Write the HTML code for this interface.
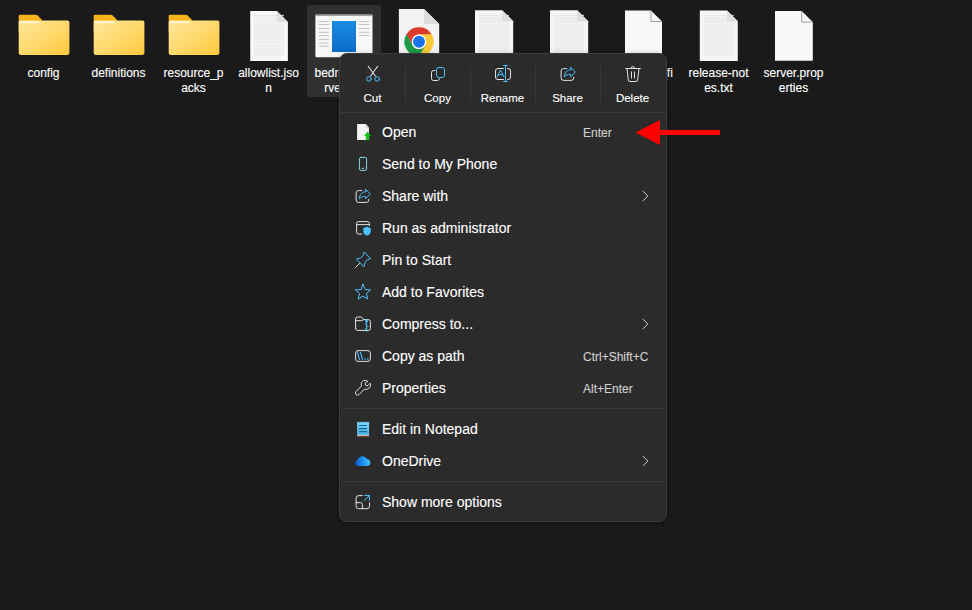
<!DOCTYPE html>
<html><head><meta charset="utf-8">
<style>
html,body{margin:0;padding:0;}
body{width:972px;height:610px;background:#1a1a1a;position:relative;overflow:hidden;font-family:"Liberation Sans",sans-serif;color:#fff;-webkit-text-stroke:0.12px currentColor;}
.abs{position:absolute;left:0;top:0;}
.lbl{position:absolute;width:75px;text-align:center;font-size:12px;line-height:15px;color:#fff;}
.sel{position:absolute;left:307px;top:5px;width:74px;height:92px;background:#303030;border-radius:2px;}
#menu{position:absolute;left:339px;top:53px;width:326px;height:467px;background:#2b2b2b;border:1px solid #3c3c3c;border-radius:8px;box-shadow:0 2px 6px rgba(0,0,0,0.3);}
.tb{position:absolute;top:0;width:65px;height:60px;}
.tb .t{position:absolute;left:0;width:65px;top:37px;text-align:center;font-size:11.5px;line-height:15px;color:#fff;}
.vsep{position:absolute;top:12px;width:1px;height:36px;background:#383838;}
.hsep{position:absolute;left:3px;width:321px;height:1px;background:#3a3a3a;}
.it{position:absolute;left:0;width:326px;height:32px;}
.it .t{position:absolute;left:42px;top:-2px;font-size:14px;line-height:32px;color:#fff;white-space:nowrap;}
.it .k{position:absolute;left:243px;top:-1px;font-size:12px;line-height:32px;color:#d0d0d0;white-space:nowrap;}
</style></head><body>

<!-- files row -->
<div class="sel"></div>

<svg class="abs" width="972" height="110" viewBox="0 0 972 110">
  <defs>
    <linearGradient id="fg" x1="0" y1="0" x2="1" y2="1">
      <stop offset="0" stop-color="#ffe69a"/>
      <stop offset="0.55" stop-color="#ffd86a"/>
      <stop offset="1" stop-color="#ffc83a"/>
    </linearGradient>
    <linearGradient id="bg" x1="0" y1="0" x2="0" y2="1">
      <stop offset="0" stop-color="#1a8ce2"/>
      <stop offset="1" stop-color="#0c6cc9"/>
    </linearGradient>
    <g id="folder">
      <path d="M18.7 16a1.2 1.2 0 0 1 1.2-1.2H35.6C36.4 14.8 37 15.1 37.6 15.6L41.6 19.6V32H18.7Z" fill="#f4b41a"/>
      <rect x="18.7" y="20.4" width="50.7" height="34.5" rx="1.8" fill="url(#fg)"/>
      <rect x="19.2" y="21" width="20.4" height="2.2" fill="#fff6d6" opacity="0.85"/>
    </g>
    <g id="lines">
      <path d="M254 15.4H284M254 17.6H284M254 19.8H284M254 22.0H284M254 24.2H284M254 26.4H284M254 28.6H284M254 30.8H284M254 33.0H284M254 35.2H284M254 37.4H284M254 39.6H284M254 41.8H284M254 44.0H284M254 46.2H284M254 48.4H284M254 50.6H284M254 52.8H284M254 55.0H284" stroke="#e4e4e4" stroke-width="0.9"/>
    </g>
  </defs>
  <use href="#folder"/>
  <use href="#folder" x="75"/>
  <use href="#folder" x="150"/>

  <!-- allowlist -->
  <path d="M250.2 11H276.8L287.9 22V61.1H250.2Z" fill="#f7f7f7"/>
  <use href="#lines"/>
  <path d="M276.8 11V22H287.9Z" fill="#e0e0e0"/>

  <!-- bedrock exe -->
  <rect x="315.4" y="14.4" width="57.1" height="42.8" rx="1" fill="#f7f7f7"/>
  <rect x="315.4" y="14.4" width="57.1" height="1.3" fill="#7a7a7a"/><path d="M366.5 15.6h1M368.5 15.6h1M370.5 15.6h1" stroke="#9a9a9a" stroke-width="0.8"/>
  <rect x="332" y="21" width="24" height="31" fill="url(#bg)"/>
  <path d="M318.7 21.5H329M318.7 24.5H329M318.7 28.5H329M318.7 32.3H329M318.7 35.5H329M318.7 39.4H329M318.7 43.1H329M318.7 46.3H329M359 21.5H369.2M359 24.5H369.2M359 28.5H369.2M359 32.3H369.2M359 35.5H369.2" stroke="#bdbdbd" stroke-width="0.9"/>

  <!-- chrome html -->
  <path d="M398.9 8.9H424L439.2 24V60H398.9Z" fill="#f3f3f3"/>
  <path d="M424 8.9V24H439.2Z" fill="#dcdcdc"/>
  <path d="M406.44 34.55A14.5 14.5 0 0 1 431.56 34.55L419 34.55A7.25 7.25 0 0 0 412.72 45.43Z" fill="#db3b2b" stroke="#db3b2b" stroke-width="0.3"/>
  <path d="M431.56 34.55A14.5 14.5 0 0 1 419 56.3L425.28 45.43A7.25 7.25 0 0 0 419 34.55Z" fill="#fcc934" stroke="#fcc934" stroke-width="0.3"/>
  <path d="M419 56.3A14.5 14.5 0 0 1 406.44 34.55L412.72 45.43A7.25 7.25 0 0 0 425.28 45.43Z" fill="#1e9a48" stroke="#1e9a48" stroke-width="0.3"/>
  <circle cx="419" cy="41.8" r="7.2" fill="#fff"/>
  <circle cx="419" cy="41.8" r="6" fill="#1a73e8"/>

  <!-- lined docs -->
  <path d="M475 10.2H502.2L513.2 21.2V61H475Z" fill="#f5f5f5"/>
  <use href="#lines" x="225"/>
  <path d="M502.2 10.2V21.2H513.2Z" fill="#dedede"/>
  <path d="M550 10.2H577.2L588.2 21.2V61H550Z" fill="#f5f5f5"/>
  <use href="#lines" x="300"/>
  <path d="M577.2 10.2V21.2H588.2Z" fill="#dedede"/>

  <!-- blank doc 644 -->
  <path d="M625 10.5H651L662 21.5V61H625Z" fill="#f8f8f8"/>
  <path d="M651 10.5V21.5H662" fill="none" stroke="#8a8a8a" stroke-width="0.8"/>

  <!-- release notes -->
  <path d="M699.8 10.5H727L737.8 21.3V61H699.8Z" fill="#f5f5f5"/>
  <use href="#lines" x="449.8"/>
  <path d="M727 10.5V21.3H737.8Z" fill="#dedede"/>

  <!-- server.properties -->
  <path d="M775 11H801.7L812.8 22.1V60.7H775Z" fill="#f8f8f8"/>
  <path d="M801.7 11V22.1H812.8" fill="none" stroke="#8a8a8a" stroke-width="0.8"/>
</svg>

<div class="lbl" style="left:6px;top:66px">config</div>
<div class="lbl" style="left:81px;top:66px">definitions</div>
<div class="lbl" style="left:156px;top:66px">resource_p<br>acks</div>
<div class="lbl" style="left:231px;top:66px">allowlist.jso<br>n</div>
<div class="lbl" style="left:306px;top:66px;left:308px">bedrock_se<br>rver.exe</div>
<div class="lbl" style="left:381px;top:66px">bedrock_se<br>rver_how_t</div>
<div class="lbl" style="left:456px;top:66px">Dedicated_<br>Server.txt</div>
<div class="lbl" style="left:531px;top:66px">permissions<br>.json</div>
<div class="lbl" style="left:606px;top:66px">profanity_fi<br>lter.wlist</div>
<div class="lbl" style="left:681px;top:66px">release-not<br>es.txt</div>
<div class="lbl" style="left:756px;top:66px">server.prop<br>erties</div>

<div id="menu">
  <div class="tb" style="left:0"><div class="t">Cut</div></div>
  <div class="vsep" style="left:65px"></div>
  <div class="tb" style="left:65px"><div class="t">Copy</div></div>
  <div class="vsep" style="left:130px"></div>
  <div class="tb" style="left:130px"><div class="t">Rename</div></div>
  <div class="vsep" style="left:195px"></div>
  <div class="tb" style="left:195px"><div class="t">Share</div></div>
  <div class="vsep" style="left:260px"></div>
  <div class="tb" style="left:260px"><div class="t">Delete</div></div>
  <div class="hsep" style="top:58px;left:0;width:326px"></div>

  <div class="it" style="top:64px"><div class="t">Open</div><div class="k">Enter</div></div>
  <div class="it" style="top:96px"><div class="t">Send to My Phone</div></div>
  <div class="it" style="top:128px"><div class="t">Share with</div></div>
  <div class="it" style="top:160px"><div class="t">Run as administrator</div></div>
  <div class="it" style="top:192px"><div class="t">Pin to Start</div></div>
  <div class="it" style="top:224px"><div class="t">Add to Favorites</div></div>
  <div class="it" style="top:256px"><div class="t">Compress to...</div></div>
  <div class="it" style="top:288px"><div class="t">Copy as path</div><div class="k">Ctrl+Shift+C</div></div>
  <div class="it" style="top:320px"><div class="t">Properties</div><div class="k">Alt+Enter</div></div>
  <div class="hsep" style="top:354px"></div>
  <div class="it" style="top:361px"><div class="t">Edit in Notepad</div></div>
  <div class="it" style="top:393px"><div class="t">OneDrive</div></div>
  <div class="hsep" style="top:427px"></div>
  <div class="it" style="top:434px"><div class="t">Show more options</div></div>
</div>

<!-- menu icons overlay -->
<svg class="abs" width="972" height="610" viewBox="0 0 972 610" fill="none" stroke-linecap="round" stroke-linejoin="round">
  <defs>
    <g id="shareic">
      <path d="M566.8 68.6H563.5A2.4 2.4 0 0 0 561.1 71V78A2.4 2.4 0 0 0 563.5 80.4H571.3A2.4 2.4 0 0 0 573.7 78V77.4" stroke="#e2e2e2" stroke-width="1"/>
      <path d="M570.7 67.4L575.4 72L570.7 76.7V74.3C567.6 74.3 565.6 75.3 564.2 76.8C564.6 72.6 567 69.9 570.7 69.7Z" stroke="#4cc2ff" stroke-width="1"/>
    </g>
    <linearGradient id="np" x1="0" y1="0" x2="0" y2="1">
      <stop offset="0" stop-color="#7fd6f7"/>
      <stop offset="1" stop-color="#45b4e4"/>
    </linearGradient>
    <linearGradient id="od" x1="0" y1="0" x2="1" y2="0">
      <stop offset="0" stop-color="#0b58c2"/>
      <stop offset="0.5" stop-color="#1b8ff0"/>
      <stop offset="1" stop-color="#3cc4ff"/>
    </linearGradient>
  </defs>

  <!-- Cut -->
  <path d="M368.2 66.2L375.3 76M377.7 66.2L370.6 76" stroke="#e6e6e6" stroke-width="1.05"/>
  <circle cx="368.9" cy="78.9" r="2.25" stroke="#4cc2ff" stroke-width="1"/>
  <circle cx="377.1" cy="78.9" r="2.25" stroke="#4cc2ff" stroke-width="1"/>

  <!-- Copy -->
  <rect x="436.5" y="67.5" width="8" height="10" rx="2.2" stroke="#4cc2ff" stroke-width="1"/>
  <path d="M434.9 70.5H433.6A2.1 2.1 0 0 0 431.5 72.6V78.4A2.1 2.1 0 0 0 433.6 80.5H437.4A2.1 2.1 0 0 0 439.5 78.9" stroke="#e6e6e6" stroke-width="1"/>

  <!-- Rename -->
  <path d="M503.4 68.5H498A2.4 2.4 0 0 0 495.5 71V77A2.4 2.4 0 0 0 498 79.5H503.4M507.6 68.5H508A2.4 2.4 0 0 1 510.5 71V77A2.4 2.4 0 0 1 508 79.5H507.6" stroke="#e2e2e2" stroke-width="1"/>
  <path d="M505.5 65.5V81.5M503.5 65.5H507.5M503.5 81.5H507.5M497 77L500.5 70L504 77M498.2 74.8H502.8" stroke="#4cc2ff" stroke-width="1"/>

  <!-- Share -->
  <use href="#shareic"/>

  <!-- Delete -->
  <path d="M625.7 68.5H640.3M631 68.3A1.8 1.8 0 0 1 634.6 68.3M627 68.5L628.3 80A1.6 1.6 0 0 0 629.9 81.5H636A1.6 1.6 0 0 0 637.6 80L639 68.5M631.5 71.8V78.1M634.5 71.8V78.1" stroke="#e2e2e2" stroke-width="1"/>

  <!-- Open -->
  <path d="M357.1 123.9H365.8L368.9 127.5V139.9H357.1Z" fill="#f4f4f4"/>
  <path d="M365.8 123.9V127.5H368.9Z" fill="#c9c9c9"/>
  <path d="M367.5 131.8L371.1 135.8H369.2V140.3H365.8V135.8H363.9Z" fill="#18c21a"/>

  <!-- Phone -->
  <rect x="359.4" y="157.4" width="7.2" height="13" rx="1.5" stroke="#86d5e8" stroke-width="1"/>
  <path d="M362.2 168.3H363.8" stroke="#86d5e8" stroke-width="1"/>

  <!-- Share with -->
  <use href="#shareic" x="-205" y="122"/>

  <!-- Run as admin -->
  <path d="M361.8 234H358.6A2 2 0 0 1 356.6 232V223.6A2 2 0 0 1 358.6 221.6H367.4A2 2 0 0 1 369.4 223.6V225.6M356.6 224.6H369.4" stroke="#e2e2e2" stroke-width="1"/>
  <path d="M367 226C368.2 227 369.6 227.5 371.1 227.6V231.5C371.1 233.8 369.5 235.3 367 236.1C364.5 235.3 362.9 233.8 362.9 231.5V227.6C364.4 227.5 365.8 227 367 226Z" fill="#4cc2ff" stroke="#2b2b2b" stroke-width="0.8"/>

  <!-- Pin -->
  <path d="M364.4 252.3L370.6 258.5L367.8 259.6Q365.8 260.5 365.2 262.5L363.8 266.6L356.4 259.2L360.6 257.8Q362.5 257.1 363.2 255.2Z" stroke="#4cc2ff" stroke-width="1"/>
  <path d="M359.5 263.5L355.6 267.4" stroke="#e2e2e2" stroke-width="1"/>

  <!-- Star -->
  <path d="M363 284.3L365.2 289.5L370.6 289.9L366.5 293.5L367.8 299.1L363 296.1L358.2 299.1L359.5 293.5L355.4 289.9L360.8 289.5Z" stroke="#4cc2ff" stroke-width="1"/>

  <!-- Compress -->
  <path d="M355.6 328.6V319A2 2 0 0 1 357.6 317H360.8A1.6 1.6 0 0 1 362 317.5L363.6 319.6H368.4A2 2 0 0 1 370.4 321.6V328.4A2 2 0 0 1 368.4 330.4H357.6A2 2 0 0 1 355.6 328.4M355.6 320.7H361.8L363.6 319.6" stroke="#e2e2e2" stroke-width="1"/>
  <path d="M366.6 320.6V331.3M365.5 319.6V321A1.1 1.1 0 0 0 367.7 321V319.6" stroke="#4cc2ff" stroke-width="1"/>
  <path d="M365.3 324.2H366M367.3 326.6H368M365.3 329H366" stroke="#4cc2ff" stroke-width="1"/>

  <!-- Copy as path -->
  <rect x="355.6" y="350.6" width="14.8" height="10.8" rx="2.5" stroke="#e2e2e2" stroke-width="1"/>
  <path d="M357.4 352.4L359.5 359.4M360.4 352.4L362.5 359.4" stroke="#4cc2ff" stroke-width="1.1"/>
  <circle cx="365" cy="359.1" r="0.8" fill="#4cc2ff"/>
  <circle cx="367.8" cy="359.1" r="0.8" fill="#4cc2ff"/>

  <!-- Properties wrench -->
  <path d="M367.6 381.2C366.2 379.9 363.8 379.9 362.4 381.4C361.2 382.7 360.9 384.6 361.5 386.1L356.1 391.5A2.1 2.1 0 0 0 359.1 394.5L364.5 389.1C366 389.7 367.8 389.4 369.1 388.2C370.6 386.8 370.9 384.6 370.3 383.2L368.2 385.3A1.84 1.84 0 0 1 365.6 382.7Z" stroke="#e2e2e2" stroke-width="1"/>

  <!-- Notepad -->
  <rect x="357.1" y="421.9" width="12" height="13.6" fill="url(#np)"/>
  <path d="M359.5 421.4V422.6M362.6 421.4V422.6M365.8 421.4V422.6" stroke="#1d5a80" stroke-width="1.1" stroke-linecap="butt"/>
  <path d="M359.1 425.5H366.9M359.1 428.6H366.9M359.1 431.6H366.9" stroke="#0e6796" stroke-width="1.2" stroke-linecap="butt"/>
  <rect x="357.1" y="434.8" width="12" height="1" fill="#f0f0f0"/>
  <rect x="357.1" y="435.8" width="12" height="1.4" fill="#6a4527"/>

  <!-- OneDrive -->
  <path d="M357.8 465.9A2.9 2.9 0 0 1 357.4 460.2A5.2 5.2 0 0 1 367 459A3.5 3.5 0 0 1 367.6 465.9Z" fill="url(#od)"/>

  <!-- Show more -->
  <path d="M362.4 495.6H358.6A2.5 2.5 0 0 0 356.1 498.1V506.2A2.5 2.5 0 0 0 358.6 508.7H367A2.5 2.5 0 0 0 369.5 506.2V502.8M356.1 502.6H360.4A2 2 0 0 1 362.4 504.6V508.7" stroke="#e2e2e2" stroke-width="1"/>
  <path d="M364.2 500.6L369.4 495.4M364.6 495.4H369.4V500.2" stroke="#4cc2ff" stroke-width="1"/>

  <!-- chevrons -->
  <path d="M643.2 191.4L647.8 196L643.2 200.6M643.2 319.4L647.8 324L643.2 328.6M643.2 456.4L647.8 461L643.2 465.6" stroke="#cfcfcf" stroke-width="1"/>

  <!-- red arrow -->
  <polygon points="635.5,132.5 660,120 660,145" fill="#ff0000" stroke="none"/>
  <rect x="659" y="130" width="61" height="5" fill="#ff0000" stroke="none"/>
</svg>
</body></html>
